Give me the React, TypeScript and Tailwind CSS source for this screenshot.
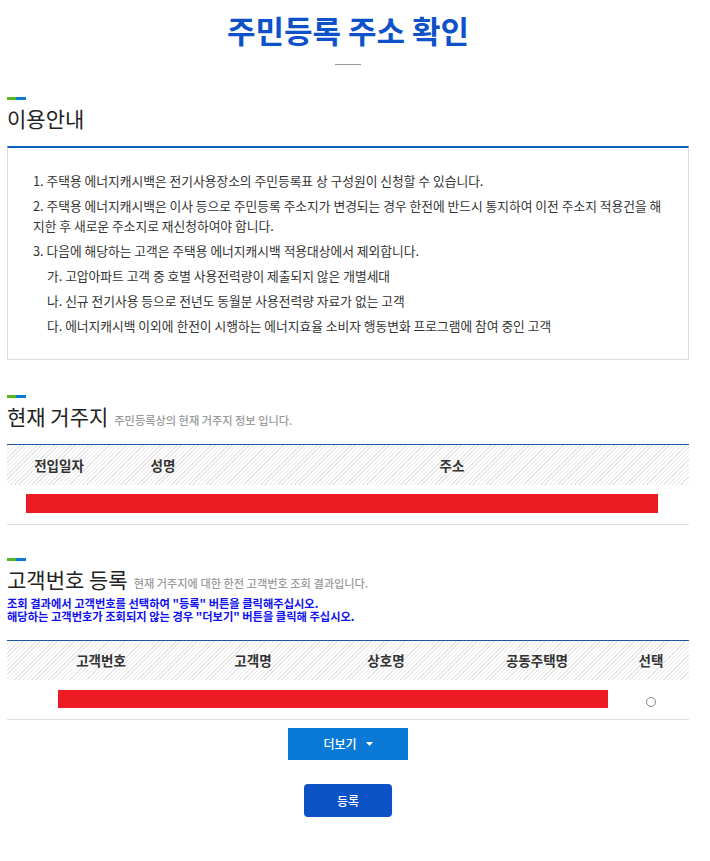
import React from 'react';

const stripe =
    'bg-[image:repeating-linear-gradient(135deg,#e6e6e6_0px,#e6e6e6_1px,#ffffff_1px,#ffffff_3px)]';

function SectionTitle({ title, sub }: { title: string; sub?: string }) {
    return (
        <div>
            <div className="flex">
                <span className="w-[9px] h-[3px] bg-[#52b821]" />
                <span className="w-[10px] h-[3px] bg-[#0a7bd6]" />
            </div>
            <div className="mt-[4px] flex h-[28px] items-baseline leading-[28px]">
                <h2 className="text-[21px] font-normal leading-[28px] text-[#222]">{title}</h2>
                {sub && (
                    <span className="ml-[6px] text-[11.2px] font-medium leading-[28px] text-[#9a9a9a]">{sub}</span>
                )}
            </div>
        </div>
    );
}

export default function App() {
    const guide = [
        '1. 주택용 에너지캐시백은 전기사용장소의 주민등록표 상 구성원이 신청할 수 있습니다.',
        '2. 주택용 에너지캐시백은 이사 등으로 주민등록 주소지가 변경되는 경우 한전에 반드시 통지하여 이전 주소지 적용건을 해지한 후 새로운 주소지로 재신청하여야 합니다.',
        '3. 다음에 해당하는 고객은 주택용 에너지캐시백 적용대상에서 제외합니다.',
    ];
    const subItems = [
        '가. 고압아파트 고객 중 호별 사용전력량이 제출되지 않은 개별세대',
        '나. 신규 전기사용 등으로 전년도 동월분 사용전력량 자료가 없는 고객',
        '다. 에너지캐시백 이외에 한전이 시행하는 에너지효율 소비자 행동변화 프로그램에 참여 중인 고객',
    ];

    return (
        <div className="min-h-screen bg-white pl-[7px] pr-[21px] font-['Noto_Sans_CJK_KR',sans-serif] text-[#333]">
            {/* Page title */}
            <h1 className="pt-[12px] text-center text-[31px] font-bold leading-[36px] text-[#0d52c9]">
                주민등록 주소 확인
            </h1>
            <div className="mx-auto mt-[16px] h-px w-[26px] bg-[#999]" />

            {/* 이용안내 */}
            <div className="mt-[32px]">
                <SectionTitle title="이용안내" />
            </div>
            <div className="mt-[14px] border-t-2 border-x border-b border-[#dcdcdc] border-t-[#0a5fbf] pl-[25px] pr-[20px] py-[23px] text-[12.75px] leading-[20px] text-[#333]">
                <ul className="flex flex-col gap-[5px]">
                    {guide.map((g) => (
                        <li key={g}>{g}</li>
                    ))}
                    {subItems.map((s) => (
                        <li key={s} className="pl-[14px]">
                            {s}
                        </li>
                    ))}
                </ul>
            </div>

            {/* 현재 거주지 */}
            <div className="mt-[35px]">
                <SectionTitle title="현재 거주지" sub="주민등록상의 현재 거주지 정보 입니다." />
            </div>
            <table className="mt-[14px] w-full table-fixed border-t border-[#1e56a0] text-[13.5px]">
                <colgroup>
                    <col className="w-[104px]" />
                    <col className="w-[104px]" />
                    <col />
                </colgroup>
                <thead>
                    <tr className={stripe}>
                        <th className="h-[40px] font-bold text-[#333]">전입일자</th>
                        <th className="h-[40px] font-bold text-[#333]">성명</th>
                        <th className="h-[40px] font-bold text-[#333]">주소</th>
                    </tr>
                </thead>
                <tbody>
                    <tr className="border-b border-[#e0e0e0]">
                        <td colSpan={3} className="pt-[9px] pb-[11px]">
                            <div className="ml-[19px] h-[19px] w-[632px] bg-[#ed1c24]" />
                        </td>
                    </tr>
                </tbody>
            </table>

            {/* 고객번호 등록 */}
            <div className="mt-[33px]">
                <SectionTitle title="고객번호 등록" sub="현재 거주지에 대한 한전 고객번호 조회 결과입니다." />
            </div>
            <p className="mt-[4px] text-[11.25px] font-bold leading-[13px] text-[#1010f0]">
                조회 결과에서 고객번호를 선택하여 "등록" 버튼을 클릭해주십시오.
                <br />
                해당하는 고객번호가 조회되지 않는 경우 "더보기" 버튼을 클릭해 주십시오.
            </p>
            <table className="mt-[17px] w-full table-fixed border-t border-[#1e56a0] text-[13.5px]">
                <colgroup>
                    <col className="w-[188px]" />
                    <col className="w-[116px]" />
                    <col className="w-[150px]" />
                    <col className="w-[152px]" />
                    <col />
                </colgroup>
                <thead>
                    <tr className={stripe}>
                        <th className="h-[40px] font-bold text-[#333]">고객번호</th>
                        <th className="h-[40px] font-bold text-[#333]">고객명</th>
                        <th className="h-[40px] font-bold text-[#333]">상호명</th>
                        <th className="h-[40px] font-bold text-[#333]">공동주택명</th>
                        <th className="h-[40px] font-bold text-[#333]">선택</th>
                    </tr>
                </thead>
                <tbody>
                    <tr className="border-b border-[#e0e0e0]">
                        <td colSpan={4} className="pt-[10px] pb-[11px]">
                            <div className="ml-[51px] h-[18px] w-[550px] bg-[#ed1c24]" />
                        </td>
                        <td className="text-center">
                            <span className="inline-block h-[10px] w-[10px] rounded-full border border-[#8a8a8a] align-middle" />
                        </td>
                    </tr>
                </tbody>
            </table>

            {/* Buttons */}
            <div className="mt-[8px] flex flex-col items-center pb-[40px]">
                <button className="flex h-[32px] w-[120px] items-center justify-center gap-[9px] bg-[#0a7ad6] text-[12px] font-medium text-white">
                    더보기
                    <svg width="7" height="4" viewBox="0 0 7 4">
                        <path d="M0 0h7L3.5 4z" fill="#fff" />
                    </svg>
                </button>
                <button className="mt-[24px] h-[33px] w-[88px] rounded-[4px] bg-[#0b52c6] text-[12px] font-medium text-white">
                    등록
                </button>
            </div>
        </div>
    );
}
